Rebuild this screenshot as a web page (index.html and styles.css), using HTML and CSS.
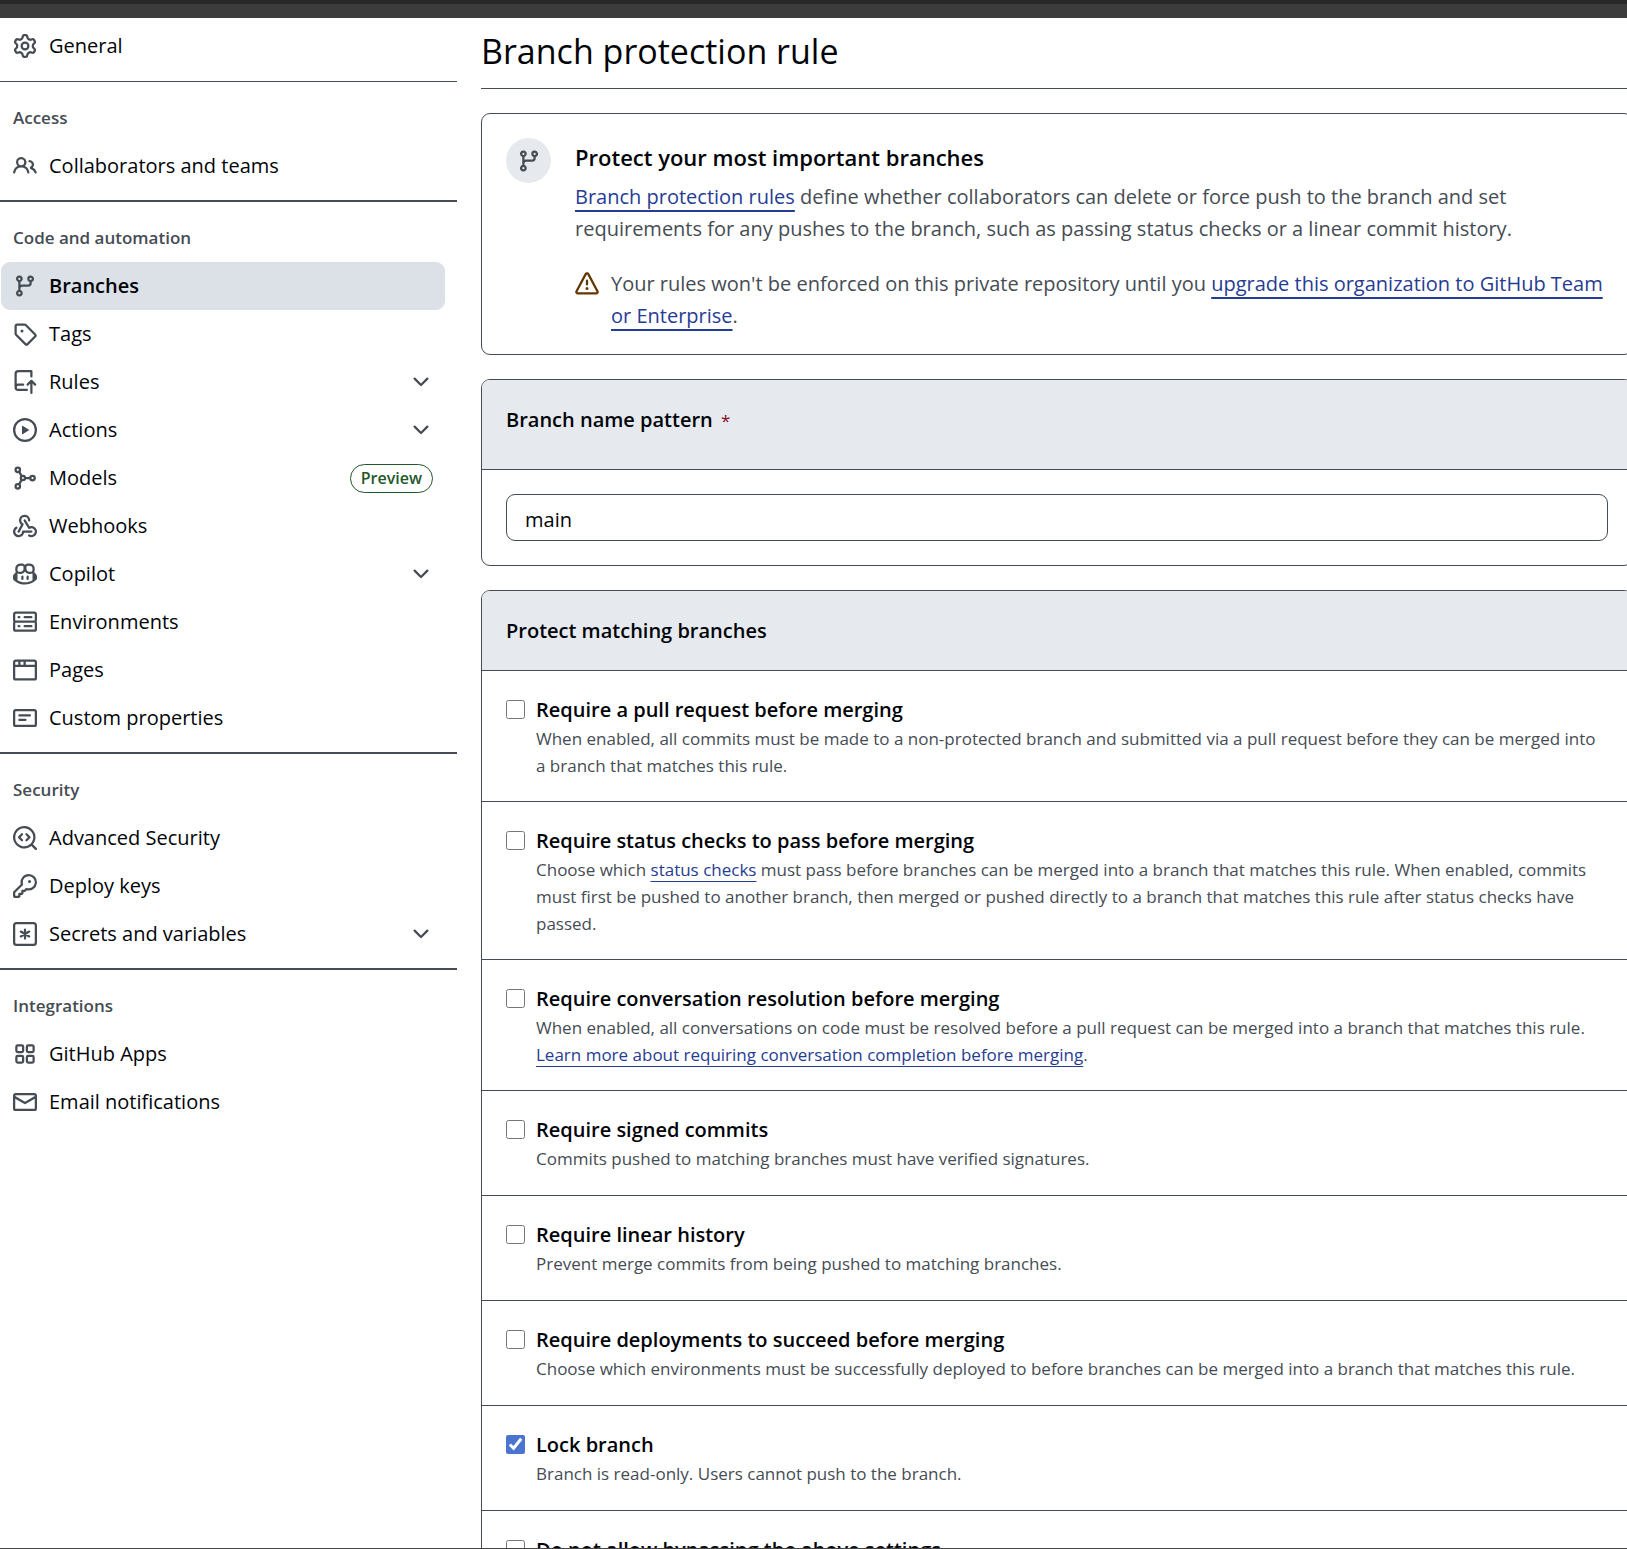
FILE: index.html
```html
<!DOCTYPE html>
<html lang="en">
<head>
<meta charset="utf-8">
<meta name="viewport" content="width=device-width, initial-scale=1">
<title>Branch protection rule</title>
<link rel="stylesheet" href="styles.css">
</head>
<body>
<svg class="sprite" aria-hidden="true">
  <symbol id="i-gear" viewBox="0 0 16 16"><path d="M8 0a8.2 8.2 0 0 1 .701.031C9.444.095 9.99.645 10.16 1.29l.288 1.107c.018.066.079.158.212.224.231.114.454.243.668.386.123.082.233.09.299.071l1.103-.303c.644-.176 1.392.021 1.82.63.27.385.506.792.704 1.218.315.675.111 1.422-.364 1.891l-.814.806c-.049.048-.098.147-.088.294.016.257.016.515 0 .772-.01.147.038.246.088.294l.814.806c.475.469.679 1.216.364 1.891a7.977 7.977 0 0 1-.704 1.217c-.428.61-1.176.807-1.82.63l-1.102-.302c-.067-.019-.177-.011-.3.071a5.909 5.909 0 0 1-.668.386c-.133.066-.194.158-.211.224l-.29 1.106c-.168.646-.715 1.196-1.458 1.26a8.006 8.006 0 0 1-1.402 0c-.743-.064-1.289-.614-1.458-1.26l-.289-1.106c-.018-.066-.079-.158-.212-.224a5.738 5.738 0 0 1-.668-.386c-.123-.082-.233-.09-.299-.071l-1.103.303c-.644.176-1.392-.021-1.82-.63a8.12 8.12 0 0 1-.704-1.218c-.315-.675-.111-1.422.363-1.891l.815-.806c.05-.048.098-.147.088-.294a6.214 6.214 0 0 1 0-.772c.01-.147-.038-.246-.088-.294l-.815-.806C.635 6.045.431 5.298.746 4.623a7.92 7.92 0 0 1 .704-1.217c.428-.61 1.176-.807 1.82-.63l1.102.302c.067.019.177.011.3-.071.214-.143.437-.272.668-.386.133-.066.194-.158.211-.224l.29-1.106C6.009.645 6.556.095 7.299.03 7.53.01 7.764 0 8 0Zm-.571 1.525c-.036.003-.108.036-.137.146l-.289 1.105c-.147.561-.549.967-.998 1.189-.173.086-.34.183-.5.29-.417.278-.97.423-1.529.27l-1.103-.303c-.109-.03-.175.016-.195.045-.22.312-.412.644-.573.99-.014.031-.021.11.059.19l.815.806c.411.406.562.957.53 1.456a4.709 4.709 0 0 0 0 .582c.032.499-.119 1.05-.53 1.456l-.815.806c-.081.08-.073.159-.059.19.162.346.353.677.573.989.02.03.085.076.195.046l1.102-.303c.56-.153 1.113-.008 1.53.27.161.107.328.204.501.29.447.222.85.629.997 1.189l.289 1.105c.029.109.101.143.137.146a6.6 6.6 0 0 0 1.142 0c.036-.003.108-.036.137-.146l.289-1.105c.147-.561.549-.967.998-1.189.173-.086.34-.183.5-.29.417-.278.97-.423 1.529-.27l1.103.303c.109.029.175-.016.195-.045.22-.313.411-.644.573-.99.014-.031.021-.11-.059-.19l-.815-.806c-.411-.406-.562-.957-.53-1.456a4.709 4.709 0 0 0 0-.582c-.032-.499.119-1.05.53-1.456l.815-.806c.081-.08.073-.159.059-.19a6.464 6.464 0 0 0-.573-.989c-.02-.03-.085-.076-.195-.046l-1.102.303c-.56.153-1.113.008-1.53-.27a4.44 4.44 0 0 0-.501-.29c-.447-.222-.85-.629-.997-1.189l-.289-1.105c-.029-.11-.101-.143-.137-.146a6.6 6.6 0 0 0-1.142 0ZM11 8a3 3 0 1 1-6 0 3 3 0 0 1 6 0ZM9.5 8a1.5 1.5 0 1 0-3.001.001A1.5 1.5 0 0 0 9.5 8Z"/></symbol>
  <symbol id="i-people" viewBox="0 0 16 16"><path d="M2 5.5a3.5 3.5 0 1 1 5.898 2.549 5.508 5.508 0 0 1 3.034 4.084.75.75 0 1 1-1.482.235 4 4 0 0 0-7.9 0 .75.75 0 0 1-1.482-.236A5.507 5.507 0 0 1 3.102 8.05 3.493 3.493 0 0 1 2 5.5ZM11 4a3.001 3.001 0 0 1 2.22 5.018 5.01 5.01 0 0 1 2.56 3.012.749.749 0 0 1-.885.954.752.752 0 0 1-.549-.514 3.507 3.507 0 0 0-2.522-2.372.75.75 0 0 1-.574-.73v-.352a.75.75 0 0 1 .416-.672A1.5 1.5 0 0 0 11 5.5.75.75 0 0 1 11 4Zm-5.5-.5a2 2 0 1 0-.001 3.999A2 2 0 0 0 5.5 3.5Z"/></symbol>
  <symbol id="i-branch" viewBox="0 0 16 16"><path d="M9.5 3.25a2.25 2.25 0 1 1 3 2.122V6A2.5 2.5 0 0 1 10 8.5H6a1 1 0 0 0-1 1v1.128a2.251 2.251 0 1 1-1.5 0V5.372a2.25 2.25 0 1 1 1.5 0v1.836A2.493 2.493 0 0 1 6 7h4a1 1 0 0 0 1-1v-.628A2.25 2.25 0 0 1 9.5 3.25Zm-6 0a.75.75 0 1 0 1.5 0 .75.75 0 0 0-1.5 0Zm8.25-.75a.75.75 0 1 0 0 1.5.75.75 0 0 0 0-1.5ZM4.25 12a.75.75 0 1 0 0 1.5.75.75 0 0 0 0-1.5Z"/></symbol>
  <symbol id="i-tag" viewBox="0 0 16 16"><path d="M1 7.775V2.75C1 1.784 1.784 1 2.75 1h5.025c.464 0 .91.184 1.238.513l6.25 6.25a1.75 1.75 0 0 1 0 2.474l-5.026 5.026a1.75 1.75 0 0 1-2.474 0l-6.25-6.25A1.752 1.752 0 0 1 1 7.775Zm1.5 0c0 .066.026.13.073.177l6.25 6.25a.25.25 0 0 0 .354 0l5.025-5.025a.25.25 0 0 0 0-.354l-6.25-6.25a.25.25 0 0 0-.177-.073H2.75a.25.25 0 0 0-.25.25ZM6 5a1 1 0 1 1 0 2 1 1 0 0 1 0-2Z"/></symbol>
  <symbol id="i-rules" viewBox="0 0 16 16"><path d="M1 2.5A2.5 2.5 0 0 1 3.5 0h8.75a.75.75 0 0 1 .75.75v3.5a.75.75 0 0 1-1.5 0V1.5h-8a1 1 0 0 0-1 1v6.708A2.493 2.493 0 0 1 3.5 9h3.25a.75.75 0 0 1 0 1.5H3.5a1 1 0 0 0 0 2h5.75a.75.75 0 0 1 0 1.5H3.5A2.5 2.5 0 0 1 1 11.5Zm13.23 7.79h-.001l-1.224-1.224v6.184a.75.75 0 0 1-1.5 0V9.066L10.28 10.29a.75.75 0 0 1-1.06-1.061l2.505-2.504a.75.75 0 0 1 1.06 0L15.29 9.23a.751.751 0 0 1-.018 1.042.751.751 0 0 1-1.042.018Z"/></symbol>
  <symbol id="i-play" viewBox="0 0 16 16"><path d="M8 0a8 8 0 1 1 0 16A8 8 0 0 1 8 0ZM1.5 8a6.5 6.5 0 1 0 13 0 6.5 6.5 0 0 0-13 0Zm4.879-2.773 4.264 2.559a.25.25 0 0 1 0 .428l-4.264 2.559A.25.25 0 0 1 6 10.559V5.442a.25.25 0 0 1 .379-.215Z"/></symbol>
  <symbol id="i-model" viewBox="0 0 16 16"><g fill="none" stroke="currentColor" stroke-width="1.5"><circle cx="3.2" cy="2.5" r="1.5"/><circle cx="3.2" cy="13.5" r="1.5"/><circle cx="6.6" cy="8" r="1.4"/><circle cx="13" cy="8" r="1.5"/><path d="M4 3.8 5.8 6.8M4 12.2 5.8 9.2M8 8h3.5"/></g></symbol>
  <symbol id="i-webhook" viewBox="0 0 16 16"><path d="M5.5 4.25a2.25 2.25 0 0 1 4.5 0 .75.75 0 0 0 1.5 0 3.75 3.75 0 1 0-6.14 2.889l-2.272 4.258a.75.75 0 0 0 1.324.706L7 7.25a.75.75 0 0 0-.309-1.015A2.25 2.25 0 0 1 5.5 4.25Z"/><path d="M7.364 3.607a.75.75 0 0 1 1.03.257l2.608 4.349a3.75 3.75 0 1 1-.628 6.785.75.75 0 0 1 .752-1.299 2.25 2.25 0 1 0-.033-3.88.75.75 0 0 1-1.03-.256L7.107 4.636a.75.75 0 0 1 .257-1.03Z"/><path d="M2.9 8.776A.75.75 0 0 1 2.625 9.8 2.25 2.25 0 1 0 6 11.75a.75.75 0 0 1 .75-.751h5.5a.75.75 0 0 1 0 1.5H7.425a3.751 3.751 0 1 1-5.55-3.998.75.75 0 0 1 1.024.274Z"/></symbol>
  <symbol id="i-copilot" viewBox="0 0 16 16"><path d="M7.998 15.035c-4.562 0-7.873-2.914-7.998-3.749V9.338c.085-.628.677-1.686 1.588-2.065.013-.07.024-.143.036-.218.029-.183.06-.384.126-.612-.201-.508-.254-1.084-.254-1.656 0-.87.128-1.769.693-2.484.579-.733 1.494-1.124 2.724-1.261 1.206-.134 2.262.034 2.944.765.05.053.096.108.139.165.044-.057.094-.112.143-.165.682-.731 1.738-.899 2.944-.765 1.23.137 2.145.528 2.724 1.261.566.715.693 1.614.693 2.484 0 .572-.053 1.148-.254 1.656.066.228.098.429.126.612.012.076.024.148.037.218.924.385 1.522 1.471 1.591 2.095v1.872c0 .766-3.351 3.795-8.002 3.795Zm0-1.485c2.28 0 4.584-1.11 5.002-1.433V7.862l-.023-.116c-.49.21-1.075.291-1.727.291-1.146 0-2.059-.327-2.71-.991A3.222 3.222 0 0 1 8 6.303a3.24 3.24 0 0 1-.544.743c-.65.664-1.563.991-2.71.991-.652 0-1.236-.081-1.727-.291l-.023.116v4.255c.419.323 2.722 1.433 5.002 1.433ZM6.762 2.83c-.193-.206-.637-.413-1.682-.297-1.019.113-1.479.404-1.713.7-.247.312-.369.789-.369 1.554 0 .793.129 1.171.308 1.371.162.181.519.379 1.442.379.853 0 1.339-.235 1.638-.54.315-.322.527-.827.617-1.553.117-.935-.037-1.395-.241-1.614Zm4.155-.297c-1.044-.116-1.488.091-1.681.297-.204.219-.359.679-.242 1.614.091.726.303 1.231.618 1.553.299.305.784.54 1.638.54.922 0 1.28-.198 1.442-.379.179-.2.308-.578.308-1.371 0-.765-.123-1.242-.37-1.554-.233-.296-.693-.587-1.713-.7ZM6.25 9.037a.75.75 0 0 1 .75.75v1.501a.75.75 0 0 1-1.5 0V9.787a.75.75 0 0 1 .75-.75Zm4.25.75v1.501a.75.75 0 0 1-1.5 0V9.787a.75.75 0 0 1 1.5 0Z"/></symbol>
  <symbol id="i-server" viewBox="0 0 16 16"><path d="M1.75 1h12.5c.966 0 1.75.784 1.75 1.75v4c0 .372-.116.717-.314 1 .198.283.314.628.314 1v4a1.75 1.75 0 0 1-1.75 1.75H1.75A1.75 1.75 0 0 1 0 12.75v-4c0-.358.109-.707.314-1a1.739 1.739 0 0 1-.314-1v-4C0 1.784.784 1 1.75 1ZM1.5 2.75v4c0 .138.112.25.25.25h12.5a.25.25 0 0 0 .25-.25v-4a.25.25 0 0 0-.25-.25H1.75a.25.25 0 0 0-.25.25Zm.25 5.75a.25.25 0 0 0-.25.25v4c0 .138.112.25.25.25h12.5a.25.25 0 0 0 .25-.25v-4a.25.25 0 0 0-.25-.25ZM7 4.75A.75.75 0 0 1 7.75 4h4.5a.75.75 0 0 1 0 1.5h-4.5A.75.75 0 0 1 7 4.75ZM7.75 10h4.5a.75.75 0 0 1 0 1.5h-4.5a.75.75 0 0 1 0-1.5ZM3 4.75A.75.75 0 0 1 3.75 4h.5a.75.75 0 0 1 0 1.5h-.5A.75.75 0 0 1 3 4.75ZM3.75 10h.5a.75.75 0 0 1 0 1.5h-.5a.75.75 0 0 1 0-1.5Z"/></symbol>
  <symbol id="i-browser" viewBox="0 0 16 16"><path d="M0 2.75C0 1.784.784 1 1.75 1h12.5c.966 0 1.75.784 1.75 1.75v10.5A1.75 1.75 0 0 1 14.25 15H1.75A1.75 1.75 0 0 1 0 13.25ZM14.5 6h-13v7.25c0 .138.112.25.25.25h12.5a.25.25 0 0 0 .25-.25Zm-6-3.5v2h6V2.75a.25.25 0 0 0-.25-.25ZM5 2.5v2h2v-2Zm-3.25 0a.25.25 0 0 0-.25.25V4.5h2v-2Z"/></symbol>
  <symbol id="i-note" viewBox="0 0 16 16"><path d="M0 3.75C0 2.784.784 2 1.75 2h12.5c.966 0 1.75.784 1.75 1.75v8.5A1.75 1.75 0 0 1 14.25 14H1.75A1.75 1.75 0 0 1 0 12.25Zm1.75-.25a.25.25 0 0 0-.25.25v8.5c0 .138.112.25.25.25h12.5a.25.25 0 0 0 .25-.25v-8.5a.25.25 0 0 0-.25-.25ZM3.5 6.25a.75.75 0 0 1 .75-.75h7a.75.75 0 0 1 0 1.5h-7a.75.75 0 0 1-.75-.75Zm.75 2.25h4a.75.75 0 0 1 0 1.5h-4a.75.75 0 0 1 0-1.5Z"/></symbol>
  <symbol id="i-codescan" viewBox="0 0 16 16"><path d="M8.47 4.97a.75.75 0 0 0 0 1.06L9.94 7.5 8.47 8.97a.75.75 0 1 0 1.06 1.06l2-2a.75.75 0 0 0 0-1.06l-2-2a.75.75 0 0 0-1.06 0ZM6.53 6.03a.75.75 0 0 0-1.06-1.06l-2 2a.75.75 0 0 0 0 1.06l2 2a.75.75 0 1 0 1.06-1.06L5.06 7.5l1.47-1.47Z"/><path d="M12.246 13.307a7.501 7.501 0 1 1 1.06-1.06l2.474 2.473a.749.749 0 0 1-.326 1.275.749.749 0 0 1-.734-.215ZM1.5 7.5a6.002 6.002 0 0 0 3.608 5.504 6.002 6.002 0 0 0 6.486-1.117.748.748 0 0 1 .292-.293A6 6 0 1 0 1.5 7.5Z"/></symbol>
  <symbol id="i-key" viewBox="0 0 16 16"><path d="M10.5 0a5.499 5.499 0 1 1-1.288 10.848l-.932.932a.749.749 0 0 1-.53.22H7v.75a.749.749 0 0 1-.22.53l-.5.5a.749.749 0 0 1-.53.22H5v.75a.749.749 0 0 1-.22.53l-.5.5a.749.749 0 0 1-.53.22h-2A1.75 1.75 0 0 1 0 14.25v-2c0-.199.079-.389.22-.53l4.932-4.932A5.5 5.5 0 0 1 10.5 0Zm-4 5.5c-.001.431.069.86.205 1.269a.75.75 0 0 1-.181.768L1.5 12.56v1.69c0 .138.112.25.25.25h1.69l.06-.06v-1.19a.75.75 0 0 1 .75-.75h1.19l.06-.06v-1.19a.75.75 0 0 1 .75-.75h1.19l1.023-1.025a.75.75 0 0 1 .768-.18A4 4 0 1 0 6.5 5.5ZM11 6a1 1 0 1 1 0-2 1 1 0 0 1 0 2Z"/></symbol>
  <symbol id="i-secret" viewBox="0 0 16 16"><g fill="none" stroke="currentColor" stroke-width="1.5" stroke-linecap="round"><rect x=".75" y=".75" width="14.5" height="14.5" rx="1.6"/><path d="M8 5v6M5.2 6.4l5.6 3.2M10.8 6.4 5.2 9.6"/></g></symbol>
  <symbol id="i-apps" viewBox="0 0 16 16"><g fill="none" stroke="currentColor" stroke-width="1.5"><rect x="2.25" y="2.25" width="4.5" height="4.5" rx=".9"/><rect x="9.25" y="2.25" width="4.5" height="4.5" rx=".9"/><rect x="2.25" y="9.25" width="4.5" height="4.5" rx=".9"/><rect x="9.25" y="9.25" width="4.5" height="4.5" rx=".9"/></g></symbol>
  <symbol id="i-mail" viewBox="0 0 16 16"><path d="M1.75 2h12.5c.966 0 1.75.784 1.75 1.75v8.5A1.75 1.75 0 0 1 14.25 14H1.75A1.75 1.75 0 0 1 0 12.25v-8.5C0 2.784.784 2 1.75 2ZM1.5 12.251c0 .138.112.25.25.25h12.5a.25.25 0 0 0 .25-.25V5.809L8.38 9.397a.75.75 0 0 1-.76 0L1.5 5.809v6.442Zm13-8.181v-.32a.25.25 0 0 0-.25-.25H1.75a.25.25 0 0 0-.25.25v.32L8 7.88Z"/></symbol>
  <symbol id="i-chevron" viewBox="0 0 16 16"><path d="M12.78 5.22a.749.749 0 0 1 0 1.06l-4.25 4.25a.749.749 0 0 1-1.06 0L3.22 6.28a.749.749 0 1 1 1.06-1.06L8 8.939l3.72-3.719a.749.749 0 0 1 1.06 0Z"/></symbol>
  <symbol id="i-alert" viewBox="0 0 16 16"><path d="M6.457 1.047c.659-1.234 2.427-1.234 3.086 0l6.082 11.378A1.75 1.75 0 0 1 14.082 15H1.918a1.75 1.75 0 0 1-1.543-2.575Zm1.763.707a.25.25 0 0 0-.44 0L1.698 13.132a.25.25 0 0 0 .22.368h12.164a.25.25 0 0 0 .22-.368Zm.53 3.996v2.5a.75.75 0 0 1-1.5 0v-2.5a.75.75 0 0 1 1.5 0ZM9 11a1 1 0 1 1-2 0 1 1 0 0 1 2 0Z"/></symbol>
</svg>
<div class="app">
  <div class="topbar"></div>
  <div class="layout">
    <nav class="sidebar" aria-label="Repository settings">
      <ul class="nav-list">
        <li><a class="nav-item" href="#general"><svg class="icon"><use href="#i-gear"/></svg>General</a></li>
      </ul>
      <section class="nav-group nav-group-first">
        <h2 class="nav-heading">Access</h2>
        <ul class="nav-list">
          <li><a class="nav-item" href="#access"><svg class="icon"><use href="#i-people"/></svg>Collaborators and teams</a></li>
        </ul>
      </section>
      <section class="nav-group">
        <h2 class="nav-heading">Code and automation</h2>
        <ul class="nav-list">
          <li><a class="nav-item current" href="#branches" aria-current="page"><svg class="icon"><use href="#i-branch"/></svg>Branches</a></li>
          <li><a class="nav-item" href="#tags"><svg class="icon"><use href="#i-tag"/></svg>Tags</a></li>
          <li><button class="nav-item" type="button" aria-expanded="false"><svg class="icon"><use href="#i-rules"/></svg>Rules<svg class="icon chevron"><use href="#i-chevron"/></svg></button></li>
          <li><button class="nav-item" type="button" aria-expanded="false"><svg class="icon"><use href="#i-play"/></svg>Actions<svg class="icon chevron"><use href="#i-chevron"/></svg></button></li>
          <li><a class="nav-item" href="#models"><svg class="icon"><use href="#i-model"/></svg>Models<span class="badge">Preview</span></a></li>
          <li><a class="nav-item" href="#webhooks"><svg class="icon"><use href="#i-webhook"/></svg>Webhooks</a></li>
          <li><button class="nav-item" type="button" aria-expanded="false"><svg class="icon"><use href="#i-copilot"/></svg>Copilot<svg class="icon chevron"><use href="#i-chevron"/></svg></button></li>
          <li><a class="nav-item" href="#environments"><svg class="icon"><use href="#i-server"/></svg>Environments</a></li>
          <li><a class="nav-item" href="#pages"><svg class="icon"><use href="#i-browser"/></svg>Pages</a></li>
          <li><a class="nav-item" href="#properties"><svg class="icon"><use href="#i-note"/></svg>Custom properties</a></li>
        </ul>
      </section>
      <section class="nav-group">
        <h2 class="nav-heading">Security</h2>
        <ul class="nav-list">
          <li><a class="nav-item" href="#security"><svg class="icon"><use href="#i-codescan"/></svg>Advanced Security</a></li>
          <li><a class="nav-item" href="#keys"><svg class="icon"><use href="#i-key"/></svg>Deploy keys</a></li>
          <li><button class="nav-item" type="button" aria-expanded="false"><svg class="icon"><use href="#i-secret"/></svg>Secrets and variables<svg class="icon chevron"><use href="#i-chevron"/></svg></button></li>
        </ul>
      </section>
      <section class="nav-group">
        <h2 class="nav-heading">Integrations</h2>
        <ul class="nav-list">
          <li><a class="nav-item" href="#apps"><svg class="icon"><use href="#i-apps"/></svg>GitHub Apps</a></li>
          <li><a class="nav-item" href="#email"><svg class="icon"><use href="#i-mail"/></svg>Email notifications</a></li>
        </ul>
      </section>
    </nav>
    <main class="main">
      <h1 class="page-title">Branch protection rule</h1>
      <section class="card intro">
        <span class="intro-badge"><svg class="icon"><use href="#i-branch"/></svg></span>
        <div class="intro-body">
          <h2 class="intro-title">Protect your most important branches</h2>
          <p class="intro-text"><a href="#about-rules">Branch protection rules</a> define whether collaborators can delete or force push to the branch and set requirements for any pushes to the branch, such as passing status checks or a linear commit history.</p>
          <div class="notice">
            <svg class="icon notice-icon"><use href="#i-alert"/></svg>
            <p class="intro-text">Your rules won't be enforced on this private repository until you <a href="#upgrade">upgrade this organization to GitHub Team or Enterprise</a>.</p>
          </div>
        </div>
      </section>
      <form>
        <section class="card">
          <div class="card-header pattern-header"><label class="card-title" for="pattern">Branch name pattern <span class="required">*</span></label></div>
          <div class="card-body"><input class="text-input" id="pattern" type="text" value="main" required></div>
        </section>
        <section class="card">
          <div class="card-header"><h2 class="card-title">Protect matching branches</h2></div>
          <div class="rule">
            <input class="check" type="checkbox" id="r1" aria-describedby="d1">
            <div><label class="rule-title" for="r1">Require a pull request before merging</label>
            <p class="rule-text" id="d1">When enabled, all commits must be made to a non-protected branch and submitted via a pull request before they can be merged into a branch that matches this rule.</p></div>
          </div>
          <div class="rule">
            <input class="check" type="checkbox" id="r2" aria-describedby="d2">
            <div><label class="rule-title" for="r2">Require status checks to pass before merging</label>
            <p class="rule-text" id="d2">Choose which <a href="#status-checks">status checks</a> must pass before branches can be merged into a branch that matches this rule. When enabled, commits must first be pushed to another branch, then merged or pushed directly to a branch that matches this rule after status checks have passed.</p></div>
          </div>
          <div class="rule">
            <input class="check" type="checkbox" id="r3" aria-describedby="d3">
            <div><label class="rule-title" for="r3">Require conversation resolution before merging</label>
            <p class="rule-text" id="d3">When enabled, all conversations on code must be resolved before a pull request can be merged into a branch that matches this rule. <a href="#conversations">Learn more about requiring conversation completion before merging</a>.</p></div>
          </div>
          <div class="rule">
            <input class="check" type="checkbox" id="r4" aria-describedby="d4">
            <div><label class="rule-title" for="r4">Require signed commits</label>
            <p class="rule-text" id="d4">Commits pushed to matching branches must have verified signatures.</p></div>
          </div>
          <div class="rule">
            <input class="check" type="checkbox" id="r5" aria-describedby="d5">
            <div><label class="rule-title" for="r5">Require linear history</label>
            <p class="rule-text" id="d5">Prevent merge commits from being pushed to matching branches.</p></div>
          </div>
          <div class="rule">
            <input class="check" type="checkbox" id="r6" aria-describedby="d6">
            <div><label class="rule-title" for="r6">Require deployments to succeed before merging</label>
            <p class="rule-text" id="d6">Choose which environments must be successfully deployed to before branches can be merged into a branch that matches this rule.</p></div>
          </div>
          <div class="rule">
            <input class="check" type="checkbox" id="r7" aria-describedby="d7" checked>
            <div><label class="rule-title" for="r7">Lock branch</label>
            <p class="rule-text" id="d7">Branch is read-only. Users cannot push to the branch.</p></div>
          </div>
          <div class="rule">
            <input class="check" type="checkbox" id="r8">
            <div><label class="rule-title" for="r8">Do not allow bypassing the above settings</label></div>
          </div>
        </section>
      </form>
    </main>
  </div>
</div>
</body>
</html>
```
FILE: styles.css
```css
:root {
  --fg: #010409;
  --muted: #454c54;
  --border: #454c54;
  --link: #263c93;
  --subtle: #e6eaef;
}

* { box-sizing: border-box; }

body {
  margin: 0;
  font-family: "Open Sans", "Noto Sans", sans-serif;
  font-size: 20px;
  line-height: 32px;
  color: var(--fg);
  background: #fff;
}

h1, h2, p, ul { margin: 0; padding: 0; }

ul { list-style: none; }

a { color: var(--link); }

.sprite { display: none; }

.app {
  display: flex;
  flex-direction: column;
  height: 100vh;
  overflow: hidden;
  border-bottom: 1px solid #454545;
}

.topbar {
  flex: none;
  height: 18px;
  background: #3c3c3c;
  border-top: 4px solid #282828;
}

.layout {
  display: grid;
  grid-template-columns: 457px minmax(0, 1fr);
  column-gap: 24px;
  align-items: start;
  flex: 1;
  min-height: 0;
}

.icon {
  flex: none;
  width: 24px;
  height: 24px;
  fill: currentColor;
  color: var(--muted);
}

/* Sidebar */
.sidebar { padding-top: 4px; }

.nav-group {
  margin-top: 10px;
  border-top: 2px solid var(--border);
}

.nav-group-first {
  margin-top: 11px;
  border-top-width: 1px;
}

.nav-heading {
  padding: 12px 13px 0;
  font-size: 17px;
  font-weight: 600;
  line-height: 48px;
  color: var(--muted);
}

.nav-list { padding: 0 12px 0 1px; }

.nav-item {
  display: flex;
  align-items: center;
  gap: 12px;
  width: 100%;
  height: 48px;
  padding: 0 12px;
  border: 0;
  border-radius: 9px;
  background: none;
  font: inherit;
  color: var(--fg);
  text-align: left;
  text-decoration: none;
}

.nav-item.current {
  background: #dce0e7;
  font-weight: 600;
}

.chevron { margin-left: auto; }

.badge {
  margin-left: auto;
  padding: 0 10px;
  border: 1px solid #24572a;
  border-radius: 15px;
  font-size: 16px;
  font-weight: 600;
  line-height: 27px;
  color: #24572a;
}

/* Main column */
.main {
  margin-right: -6px;
  padding-top: 10px;
}

.page-title {
  padding-bottom: 14px;
  border-bottom: 1px solid var(--border);
  font-size: 34px;
  font-weight: 400;
  line-height: 46px;
}

.card {
  margin-top: 24px;
  border: 1px solid var(--border);
  border-radius: 9px;
  overflow: hidden;
}

.intro {
  display: flex;
  gap: 24px;
  padding: 24px 24px 22px;
}

.intro-badge {
  display: flex;
  flex: none;
  align-items: center;
  justify-content: center;
  width: 45px;
  height: 45px;
  border-radius: 50%;
  background: var(--subtle);
}

.intro-title {
  padding: 2px 0 7px;
  font-size: 22px;
  font-weight: 600;
  line-height: 34px;
}

.intro-text { color: var(--muted); }

.intro-text a,
.rule-text a {
  text-decoration-thickness: 2px;
  text-underline-offset: 6px;
  text-decoration-skip-ink: none;
}

.rule-text a {
  text-decoration-thickness: 1px;
  text-underline-offset: 5px;
}

.notice {
  display: flex;
  gap: 12px;
  margin-top: 23px;
}

.notice-icon {
  margin-top: 4px;
  color: #603700;
}

.card-header {
  padding: 24px 24px 23px;
  border-bottom: 1px solid var(--border);
  background: var(--subtle);
}

.pattern-header { padding-bottom: 32px; }

.card-title {
  font-size: 20px;
  font-weight: 600;
  line-height: 32px;
}

.required {
  margin-left: 3px;
  font-size: 17px;
  font-weight: 400;
  color: #86061d;
}

.card-body { padding: 24px; }

.text-input {
  display: block;
  width: 100%;
  height: 47px;
  padding: 3px 18px 0;
  border: 1px solid var(--border);
  border-radius: 9px;
  background: #fff;
  font: inherit;
  color: var(--fg);
}

.rule {
  display: flex;
  gap: 11px;
  min-height: 105px;
  padding: 24px 24px 22px;
}

.rule + .rule { border-top: 1px solid var(--border); }

.check {
  flex: none;
  width: 19px;
  height: 19px;
  margin: 5px 0 0;
  accent-color: #4a74cf;
}

.rule-title {
  display: block;
  font-weight: 600;
  line-height: 30px;
}

.rule-text {
  font-size: 17px;
  line-height: 27px;
  color: var(--muted);
}
```
